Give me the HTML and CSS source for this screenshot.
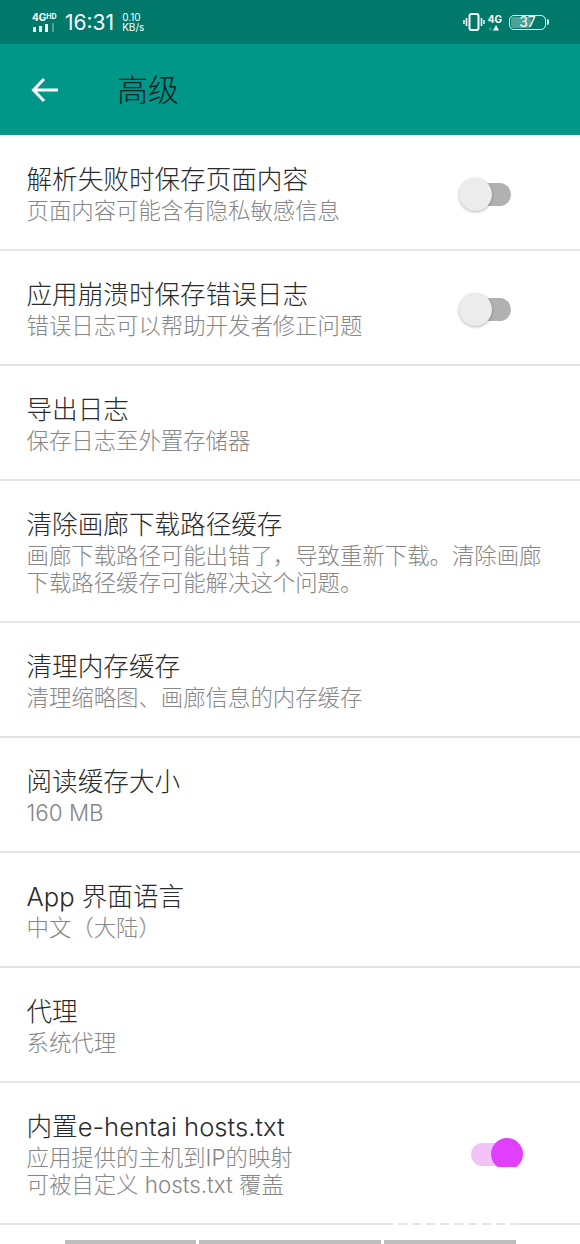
FILE: index.html
```html
<!DOCTYPE html>
<html lang="zh-CN">
<head>
    <meta charset="UTF-8">
    <meta name="viewport" content="width=device-width, initial-scale=1.0">
    <title>高级</title>
    <link rel="stylesheet" href="styles.css">
</head>
<body>
    <div class="status-bar">
        <div class="status-left">
            <div class="signal">
                <span class="signal-text">4G<small>HD</small></span>
                <svg width="24" height="10" viewBox="0 0 24 10"><rect x="1" y="4" width="3" height="5" fill="#fff"/><rect x="7" y="3" width="3" height="6" fill="#fff"/><rect x="13" y="1" width="3" height="8" fill="#fff"/><rect x="20" y="0" width="2" height="9" fill="#fff" opacity="0.3"/></svg>
            </div>
            <span class="time">16:31</span>
            <span class="speed">0.10<br>KB/s</span>
        </div>
        <div class="status-right">
            <svg class="vibrate" width="22" height="20" viewBox="0 0 22 20" fill="none" stroke="#fff"><rect x="6.500" y="2" width="9" height="16" rx="2" stroke-width="2"/><path d="M3.500 6v8M18.500 6v8" stroke-width="1.600"/><path d="M1 8v4M21 8v4" stroke-width="1.400"/></svg>
            <div class="net">
                <span>4G</span>
                <svg width="14" height="6" viewBox="0 0 14 6"><path d="M8 0l3 5.500H5z" fill="#fff"/><rect x="1" y="2.500" width="2.500" height="3" fill="#fff" opacity="0.25"/></svg>
            </div>
            <div class="battery"><div class="battery-fill"></div><span>37</span></div>
            <div class="battery-tip"></div>
        </div>
    </div>
    <header class="toolbar">
        <svg class="back" width="30" height="30" viewBox="0 0 30 30" fill="none" stroke="#fff" stroke-width="3"><path d="M28 15H4M14 4L3.500 15 14 26"/></svg>
        <h1>高级</h1>
    </header>
    <section class="list">
        <div class="row">
            <div class="row-text">
                <div class="row-title">解析失败时保存页面内容</div>
                <div class="row-sub">页面内容可能含有隐私敏感信息</div>
            </div>
            <div class="switch"><div class="thumb"></div></div>
        </div>
        <div class="row">
            <div class="row-text">
                <div class="row-title">应用崩溃时保存错误日志</div>
                <div class="row-sub">错误日志可以帮助开发者修正问题</div>
            </div>
            <div class="switch"><div class="thumb"></div></div>
        </div>
        <div class="row">
            <div class="row-text">
                <div class="row-title">导出日志</div>
                <div class="row-sub">保存日志至外置存储器</div>
            </div>
        </div>
        <div class="row">
            <div class="row-text">
                <div class="row-title">清除画廊下载路径缓存</div>
                <div class="row-sub">画廊下载路径可能出错了，导致重新下载。清除画廊<br>下载路径缓存可能解决这个问题。</div>
            </div>
        </div>
        <div class="row">
            <div class="row-text">
                <div class="row-title">清理内存缓存</div>
                <div class="row-sub">清理缩略图、画廊信息的内存缓存</div>
            </div>
        </div>
        <div class="row">
            <div class="row-text">
                <div class="row-title">阅读缓存大小</div>
                <div class="row-sub">160 MB</div>
            </div>
        </div>
        <div class="row">
            <div class="row-text">
                <div class="row-title">App 界面语言</div>
                <div class="row-sub">中文（大陆）</div>
            </div>
        </div>
        <div class="row">
            <div class="row-text">
                <div class="row-title">代理</div>
                <div class="row-sub">系统代理</div>
            </div>
        </div>
        <div class="row last">
            <div class="row-text">
                <div class="row-title">内置e-hentai hosts.txt</div>
                <div class="row-sub">应用提供的主机到IP的映射<br>可被自定义 hosts.txt 覆盖</div>
            </div>
            <div class="switch on"><div class="thumb"></div></div>
            <div class="line-gaps"></div>
        </div>
    </section>
    <div class="bottom-bars">
        <div class="bar bar-a"></div>
        <div class="bar bar-b"></div>
        <div class="bar bar-c"></div>
    </div>
</body>
</html>
```

FILE: styles.css
```css
* {
    margin: 0;
    padding: 0;
    box-sizing: border-box;
}
body {
    width: 580px;
    height: 1244px;
    overflow: hidden;
    background: #fff;
    font-family: Inter, 'Noto Sans CJK SC', sans-serif;
    font-weight: 300;
}
.status-bar {
    height: 44px;
    background: #00796b;
    color: #fff;
    display: flex;
    justify-content: space-between;
    align-items: center;
    padding: 0 31px 0 32px;
    font-family: Inter, sans-serif;
    font-weight: 400;
}
.status-left, .status-right {
    display: flex;
    align-items: center;
}
.signal {
    display: flex;
    flex-direction: column;
    width: 26px;
}
.signal-text {
    font-size: 10px;
    font-weight: 700;
    line-height: 11px;
    white-space: nowrap;
}
.signal-text small {
    font-size: 7px;
    vertical-align: 2px;
}
.time {
    font-size: 21px;
    margin-left: 7px;
}
.speed {
    font-size: 10px;
    line-height: 10px;
    margin-left: 8px;
}
.net {
    display: flex;
    flex-direction: column;
    align-items: center;
    margin-left: 2px;
    width: 16px;
    font-size: 10px;
    font-weight: 700;
    line-height: 12px;
}
.battery {
    position: relative;
    width: 37px;
    height: 15px;
    margin-left: 6px;
    border: 1.500px solid #dff;
    border-radius: 5px;
    font-size: 14px;
    line-height: 12px;
    text-align: center;
}
.battery span {
    position: relative;
}
.battery-fill {
    position: absolute;
    left: 1px;
    top: 1px;
    bottom: 1px;
    width: 56%;
    border-radius: 3px;
    background: rgba(255, 255, 255, 0.3);
}
.battery-tip {
    width: 2px;
    height: 6px;
    margin-left: 1px;
    background: #dff;
    border-radius: 0 2px 2px 0;
}
.toolbar {
    height: 91px;
    background: #009688;
    display: flex;
    align-items: center;
    padding-left: 30px;
}
.toolbar h1 {
    margin-left: 57px;
    font-size: 31px;
    font-weight: 300;
    color: #0c2421;
    line-height: 40px;
}
.list {
    padding-top: 1px;
}
.row {
    display: flex;
    align-items: center;
    justify-content: space-between;
    padding: 28px 0 25px 26.500px;
    border-bottom: 2px solid #e4e4e4;
}
.row-title {
    font-size: 25.600px;
    line-height: 32px;
    color: #2a2a2a;
}
.row-sub {
    margin-top: 1px;
    font-size: 22.400px;
    line-height: 27px;
    color: #868686;
}
.switch {
    position: relative;
    width: 40px;
    height: 23px;
    margin-right: 69px;
    background: #b2b0b2;
    border-radius: 12px;
}
.thumb {
    position: absolute;
    left: -12px;
    top: -5px;
    width: 33px;
    height: 33px;
    border-radius: 50%;
    background: #ececec;
    box-shadow: 0 1px 3px rgba(0, 0, 0, 0.3);
}
.switch.on {
    background: #f3c3f8;
}
.switch.on .thumb {
    left: 20px;
    width: 32px;
    height: 32px;
    background: #e040fb;
    box-shadow: none;
}
.switch.on .thumb::after {
    content: "";
    position: absolute;
    left: 6px;
    bottom: -2px;
    width: 21px;
    height: 5px;
    background: #fff;
    border-radius: 3px;
}
/* breaks in the last divider, under the faint watermark */
.last {
    position: relative;
}
.line-gaps {
    position: absolute;
    left: 393px;
    bottom: -2px;
    width: 127px;
    height: 2px;
    background: repeating-linear-gradient(90deg, #fff 0 5px, transparent 5px 14px);
}
.bottom-bars {
    display: flex;
    gap: 3px;
    height: 4px;
    margin-top: 15px;
    padding-left: 65px;
}
.bar {
    background: #bdbdbd;
}
.bar-a {
    width: 131px;
}
.bar-b {
    width: 182px;
}
.bar-c {
    width: 132px;
}
```
